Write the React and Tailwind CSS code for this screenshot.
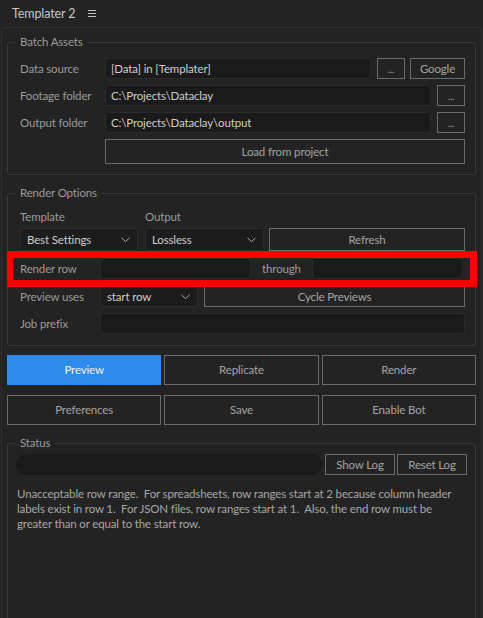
import React from "react";

function Field({ className = "", children }) {
  return (
    <div
      className={
        "h-[21px] min-w-0 bg-[#1a1a1a] border border-[#2b2b2b] rounded-[3px] flex items-center pl-[5px] text-[#cdcdcd] whitespace-nowrap overflow-hidden " +
        className
      }
    >
      {children}
    </div>
  );
}

function Btn({ className = "", children }) {
  return (
    <div
      className={
        "border border-[#6b6b6b] flex items-center justify-center text-[#a3a3a3] whitespace-nowrap " +
        className
      }
    >
      {children}
    </div>
  );
}

function Chevron() {
  return (
    <svg width="9" height="6" viewBox="0 0 9 6" className="shrink-0">
      <polyline points="0.5,0.8 4.5,4.6 8.5,0.8" fill="none" stroke="#a9a9a9" strokeWidth="1" />
    </svg>
  );
}

function Select({ className = "", children }) {
  return (
    <div
      className={
        "bg-[#1c1c1c] border border-[#2d2d2d] rounded-[3px] flex items-center justify-between pl-[6px] pr-[7px] text-[#cdcdcd] whitespace-nowrap " +
        className
      }
    >
      <span>{children}</span>
      <Chevron />
    </div>
  );
}

export default function App() {
  return (
    <div className="relative min-h-screen overflow-hidden bg-[#232323] font-['Lato',sans-serif] text-[11.5px] tracking-[-0.15px] leading-[16px] text-[#9b9b9b]">
      {/* header */}
      <div className="h-[27px] flex items-center pl-[12px]">
        <span className="text-[#c6c6c6] text-[12.5px] tracking-[-0.1px]">Templater 2</span>
        <svg width="8" height="7" viewBox="0 0 8 7" className="ml-[12px]">
          <line x1="0" y1="0.5" x2="8" y2="0.5" stroke="#c0c0c0" strokeWidth="1" />
          <line x1="0" y1="3.5" x2="8" y2="3.5" stroke="#c0c0c0" strokeWidth="1" />
          <line x1="0" y1="6.5" x2="8" y2="6.5" stroke="#c0c0c0" strokeWidth="1" />
        </svg>
      </div>

      <div className="mx-[1px] border border-[#2f2f2f] rounded-t-[3px] px-[5px] pt-[6px] pb-[40px]">
        {/* Batch Assets */}
        <fieldset className="border border-[#393939] rounded-[3px] pl-[12px] pr-[10px] pt-[8px] pb-[10px]">
          <legend className="-ml-[5px] px-[5px] leading-[16px] text-[#9b9b9b]">Batch Assets</legend>
          <div className="flex flex-col gap-[6px]">
            <div className="flex items-center h-[21px]">
              <div className="w-[85px] shrink-0">Data source</div>
              <Field className="flex-1">[Data] in [Templater]</Field>
              <Btn className="ml-[6px] w-[28px] h-[21px] text-[10px]">...</Btn>
              <Btn className="ml-[5px] w-[55px] h-[21px]">Google</Btn>
            </div>
            <div className="flex items-center h-[21px]">
              <div className="w-[85px] shrink-0">Footage folder</div>
              <Field className="flex-1">C:\Projects\Dataclay</Field>
              <Btn className="ml-[6px] w-[28px] h-[21px] text-[10px]">...</Btn>
            </div>
            <div className="flex items-center h-[21px]">
              <div className="w-[85px] shrink-0">Output folder</div>
              <Field className="flex-1">C:\Projects\Dataclay\output</Field>
              <Btn className="ml-[6px] w-[28px] h-[21px] text-[10px]">...</Btn>
            </div>
            <div className="flex items-center">
              <div className="w-[85px] shrink-0"></div>
              <Btn className="flex-1 h-[25px]">Load from project</Btn>
            </div>
          </div>
        </fieldset>

        {/* Render Options */}
        <fieldset className="mt-[10px] border border-[#393939] rounded-[3px] pl-[12px] pr-[10px] pt-[8px] pb-[11px]">
          <legend className="-ml-[5px] px-[5px] leading-[16px] text-[#9b9b9b]">Render Options</legend>
          <div className="flex h-[16px]">
            <div className="w-[125px]">Template</div>
            <div>Output</div>
          </div>
          <div className="mt-[3px] flex h-[23px]">
            <Select className="w-[118px] h-[23px]">Best Settings</Select>
            <Select className="ml-[7px] w-[119px] h-[23px]">Lossless</Select>
            <Btn className="ml-[5px] flex-1 h-[23px]">Refresh</Btn>
          </div>
          <div className="mt-[7px] flex items-center h-[21px] pr-[2px]">
            <div className="w-[80px] shrink-0">Render row</div>
            <Field className="flex-1"></Field>
            <div className="w-[61px] shrink-0 text-center">through</div>
            <Field className="flex-1"></Field>
          </div>
          <div className="mt-[7px] flex items-center h-[21px]">
            <div className="w-[80px] shrink-0">Preview uses</div>
            <Select className="w-[98px] h-[21px]">start row</Select>
            <Btn className="ml-[6px] flex-1 h-[21px]">Cycle Previews</Btn>
          </div>
          <div className="mt-[6px] flex items-center h-[21px]">
            <div className="w-[80px] shrink-0">Job prefix</div>
            <Field className="flex-1"></Field>
          </div>
        </fieldset>

        {/* action buttons */}
        <div className="mt-[9px] grid grid-cols-3 gap-x-[3px] gap-y-[10px]">
          <div className="h-[30px] bg-[#2d8ceb] flex items-center justify-center text-[#f2f2f2]">Preview</div>
          <Btn className="h-[30px]">Replicate</Btn>
          <Btn className="h-[30px]">Render</Btn>
          <Btn className="h-[30px]">Preferences</Btn>
          <Btn className="h-[30px]">Save</Btn>
          <Btn className="h-[30px]">Enable Bot</Btn>
        </div>

        {/* Status */}
        <fieldset className="mt-[10px] min-h-[220px] border border-[#393939] rounded-[3px] pl-[8px] pr-[8px] pt-[3px]">
          <legend className="-ml-[1px] px-[5px] leading-[16px] text-[#9b9b9b]">Status</legend>
          <div className="flex items-center h-[21px]">
            <div className="flex-1 h-[21px] rounded-full bg-[#1a1a1a]"></div>
            <Btn className="ml-[3px] w-[70px] h-[21px]">Show Log</Btn>
            <Btn className="ml-[2px] w-[70px] h-[21px]">Reset Log</Btn>
          </div>
          <p className="mt-[11px] pl-[1px] pr-[7px] leading-[15px] text-[#a7a7a7] whitespace-pre-wrap">
            {"Unacceptable row range.  For spreadsheets, row ranges start at 2 because column header labels exist in row 1.  For JSON files, row ranges start at 1.  Also, the end row must be greater than or equal to the start row."}
          </p>
        </fieldset>
      </div>

      {/* red annotation frame */}
      <div className="absolute left-[7px] top-[251px] w-[470px] h-[36px] border-[7px] border-l-[6px] border-[#ff0000] pointer-events-none"></div>
    </div>
  );
}
